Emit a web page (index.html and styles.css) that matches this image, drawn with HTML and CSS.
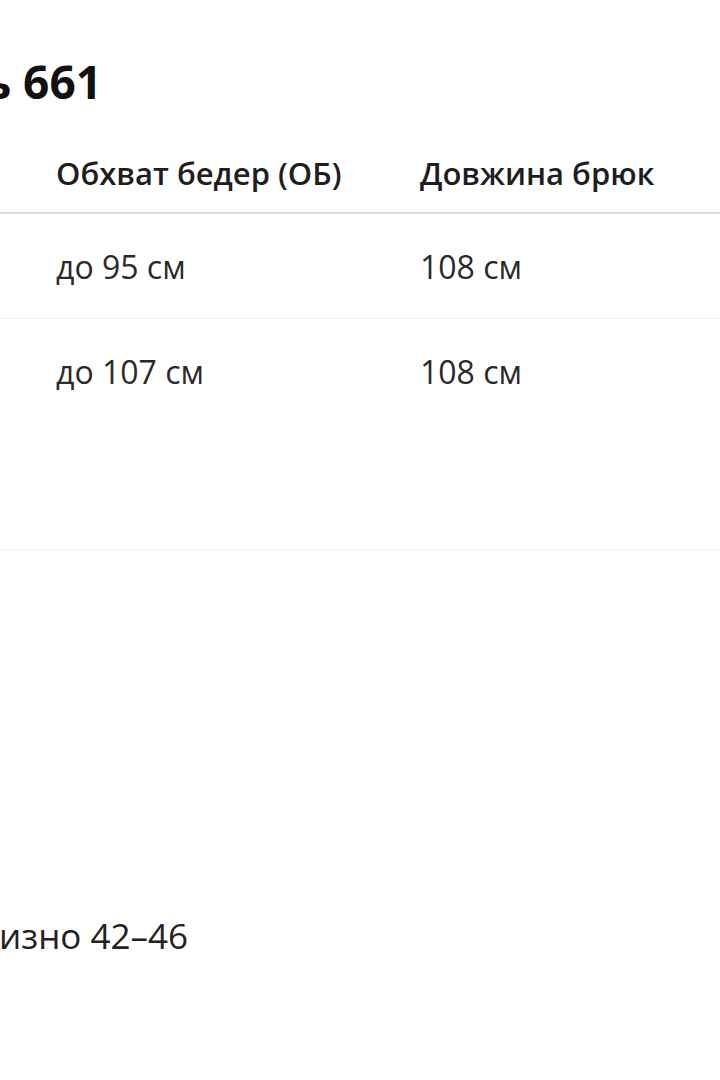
FILE: index.html
```html
<!DOCTYPE html>
<html lang="uk">
<head>
<meta charset="utf-8">
<title>Модель 661</title>
<link rel="stylesheet" href="styles.css">
</head>
<body>
<main class="page">
  <div class="title-box"><h1 class="title">Штани модель 661</h1></div>

  <div class="size-table">
    <div class="row head">
      <div class="cell"></div>
      <div class="cell">Обхват бедер (ОБ)</div>
      <div class="cell">Довжина брюк</div>
    </div>
    <div class="row">
      <div class="cell"></div>
      <div class="cell val">до 95 см</div>
      <div class="cell val">108 см</div>
    </div>
    <div class="row last">
      <div class="cell"></div>
      <div class="cell val">до 107 см</div>
      <div class="cell val">108 см</div>
    </div>
  </div>

  <hr class="section-line">

  <div class="note-box"><p class="note">Розмір: приблизно 42–46</p></div>
</main>
</body>
</html>
```

FILE: styles.css
```css
html, body {
  margin: 0;
  padding: 0;
  background: #ffffff;
}

body {
  width: 720px;
  height: 1080px;
  overflow: hidden;
  font-family: "Open Sans", "Noto Sans", sans-serif;
  color: #1c1c1c;
}

.page {
  padding-top: 53px;
}

.title-box {
  display: flex;
  justify-content: flex-end;
  width: 102px;
  white-space: nowrap;
}

.title {
  flex: none;
  margin: 0;
  font-size: 46px;
  line-height: 56px;
  font-weight: 700;
  color: #111111;
}

.size-table {
  margin-top: 44px;
  margin-left: -300px;
  width: 1100px;
}

.row {
  display: grid;
  grid-template-columns: 356px 364px 380px;
  border-bottom: 1px solid #eeeeee;
}

.row.last {
  border-bottom: none;
}

.row.head {
  border-bottom: 2px solid #dcdcdc;
}

.cell {
  white-space: nowrap;
  min-height: 1px;
}

.head .cell {
  font-size: 31px;
  line-height: 40px;
  font-weight: 600;
  color: #1e1e1e;
  padding-bottom: 19px;
}

.row:not(.head) .cell {
  font-size: 32px;
  line-height: 40px;
  color: #2a2a2a;
  padding: 33px 0 31px 0;
}

.section-line {
  margin: 126px 0 0 0;
  border: none;
  border-top: 1px solid #f0f0f0;
  height: 0;
}

.note-box {
  display: flex;
  justify-content: flex-end;
  margin-top: 362px;
  width: 188px;
  white-space: nowrap;
}

.note {
  flex: none;
  margin: 0;
  font-size: 35px;
  line-height: 48px;
  color: #222222;
}
```
